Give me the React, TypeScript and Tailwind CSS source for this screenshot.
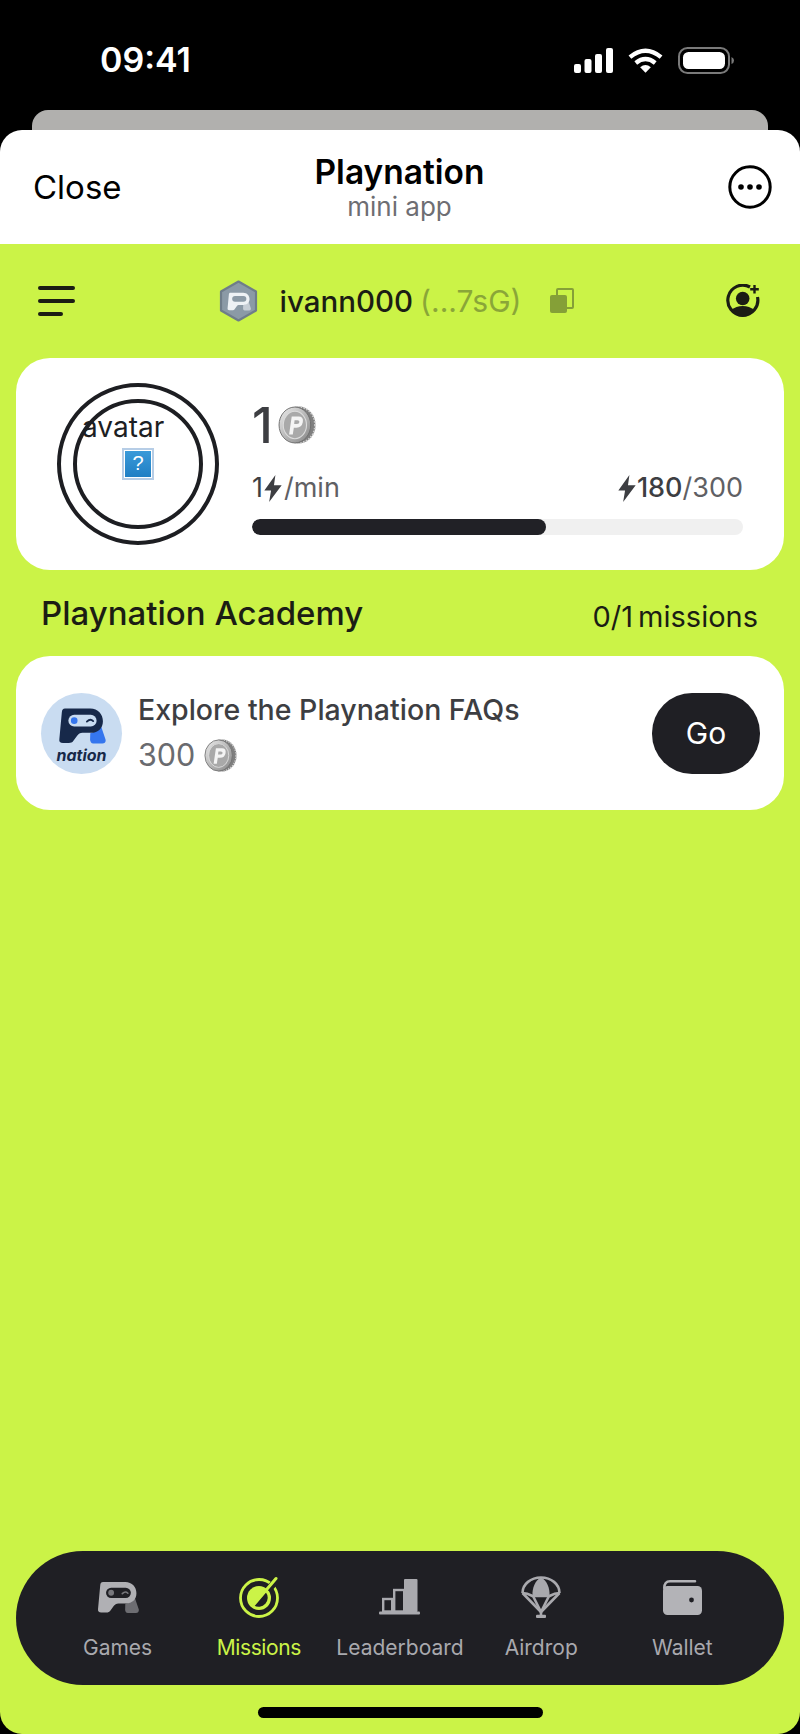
import React from "react";

const sans = { fontFamily: "Inter, 'Liberation Sans', sans-serif" };

function Coin({ size }: { size: number }) {
  return (
    <svg width={size} height={size} viewBox="0 0 36 36" className="shrink-0">
      <defs>
        <linearGradient id={`c${size}`} x1="0" y1="0" x2="1" y2="1">
          <stop offset="0" stopColor="#ececec" />
          <stop offset="1" stopColor="#858585" />
        </linearGradient>
      </defs>
      <ellipse cx="19.5" cy="18" rx="16" ry="17.5" fill="#7f7f7f" />
      <ellipse cx="19.5" cy="18" rx="15.6" ry="17" fill="none" stroke="#d0d0d0" strokeWidth="1.8" strokeDasharray="1.4 1.4" />
      <ellipse cx="16" cy="18" rx="15" ry="17" fill={`url(#c${size})`} stroke="#6f6f6f" strokeWidth="0.9" />
      <ellipse cx="16" cy="18" rx="11" ry="13" fill="#a9a9a9" stroke="#dcdcdc" strokeWidth="1" />
      <path d="M10.5 27 L13 10 H19.5 Q24.5 10 23.5 15.5 Q22.5 20.5 17.5 20.5 H15 L14 27 Z M15.7 13.5 L15.3 17 H18 Q20.1 17 20.3 15.2 Q20.4 13.5 18.5 13.5 Z" fill="#f4f4f4" fillRule="evenodd" />
    </svg>
  );
}

function Bolt({ w, h, color = "#3d3e42" }: { w: number; h: number; color?: string }) {
  return (
    <svg width={w} height={h} viewBox="0 0 20 28" className="shrink-0">
      <path d="M12.5 0 L1 16 H8 L6 28 L19 10.5 H11 Z" fill={color} />
    </svg>
  );
}

const P_BODY = "M7 0.5 H33 C41 0.5 46 6.5 46 13.5 C46 20.5 41 25.5 34 25.5 H25 C22.5 25.5 21 26.5 19.5 28.5 L15.5 34 C14.5 35.5 13 36 11 36 H5 C2 36 0.8 34.5 1.2 32 L3.8 4 C4 1.8 5 0.5 7 0.5 Z";
const P_LEG = "M33 26 C38 25 42 22 43.5 17 L48.6 32 C49.4 34.5 48 36.5 45.5 36.5 H36 C34 36.5 33.2 35 32.8 33 Z";

function PMark({ w, h, main, accent, slot, dot, wink }: { w: number; h: number; main: string; accent: string; slot: string; dot: string; wink: string }) {
  return (
    <svg width={w} height={h} viewBox="0 0 49 37">
      <path d={P_LEG} fill={accent} />
      <path d={P_BODY} fill={main} />
      <rect x="10.5" y="7" width="29" height="12" rx="6" fill={slot} />
      <circle cx="16.5" cy="13" r="3.4" fill={dot} />
      <path d="M29.5 14 Q33 10.5 36 13.5" fill="none" stroke={wink} strokeWidth="1.9" strokeLinecap="round" />
    </svg>
  );
}

function NavItem({ label, active, icon, extra }: { label: string; active?: boolean; icon: React.ReactNode; extra?: string }) {
  return (
    <div className="flex flex-col items-center">
      <div className="h-[44px] flex items-center justify-center">{icon}</div>
      <div className={`mt-[16px] text-[21px] leading-[26px] whitespace-nowrap ${active ? "text-[#cbf347]" : "text-[#a9a9ae]"} ${extra ?? ""}`}>{label}</div>
    </div>
  );
}

export default function App() {
  return (
    <div className="w-[800px] h-[1734px] bg-black flex flex-col overflow-hidden" style={sans}>
      {/* status bar */}
      <div className="h-[110px] flex items-start justify-between pl-[100px] pr-[65px] pt-[39px] text-white">
        <div className="text-[34px] leading-[42px] font-semibold">09:41</div>
        <div className="flex items-center gap-[15px] pt-[8px]">
          <svg width="39" height="25" viewBox="0 0 39 25" fill="white">
            <rect x="0" y="16" width="7" height="9" rx="2" />
            <rect x="10.5" y="11" width="7" height="14" rx="2" />
            <rect x="21" y="6" width="7" height="19" rx="2" />
            <rect x="32" y="0" width="7" height="25" rx="2" />
          </svg>
          <svg width="35" height="25" viewBox="0 0 36 25" fill="none" stroke="white" strokeWidth="4.5">
            <path d="M2 9 Q18 -4 34 9" />
            <path d="M8 15 Q18 7 28 15" />
            <path d="M18 25 L12.5 19.5 Q18 15 23.5 19.5 Z" fill="white" stroke="none" />
          </svg>
          <svg width="57" height="27" viewBox="0 0 57 27">
            <rect x="1" y="1" width="50" height="25" rx="8.5" fill="none" stroke="#7a7a7a" strokeWidth="2" />
            <rect x="5" y="5" width="42" height="17" rx="5.5" fill="white" />
            <path d="M53.5 10 Q56 11 56 13.5 Q56 16 53.5 17 Z" fill="#7a7a7a" />
          </svg>
        </div>
      </div>

      {/* card behind */}
      <div className="h-[20px] mx-[32px] bg-[#b1b0ae] rounded-t-[16px]" />

      {/* title sheet */}
      <div className="h-[114px] bg-white rounded-t-[22px] flex items-center justify-between pl-[33px] pr-[28px] shrink-0">
        <div className="text-[33px] leading-[40px] text-black w-[117px]">Close</div>
        <div className="flex flex-col items-center">
          <div className="text-[33.5px] leading-[39px] font-semibold text-black">Playnation</div>
          <div className="text-[26px] leading-[30px] text-[#6e6e73]">mini app</div>
        </div>
        <div className="w-[123px] flex justify-end">
          <svg width="44" height="44" viewBox="0 0 44 44">
            <circle cx="22" cy="22" r="20.2" fill="none" stroke="black" strokeWidth="3" />
            <circle cx="13" cy="22" r="2.8" fill="black" />
            <circle cx="22" cy="22" r="2.8" fill="black" />
            <circle cx="31" cy="22" r="2.8" fill="black" />
          </svg>
        </div>
      </div>

      {/* lime page */}
      <div className="flex-1 bg-[#cbf347] rounded-b-[22px] flex flex-col px-[16px]">
        {/* top row */}
        <div className="h-[114px] flex items-center justify-between pl-[22px] pr-[24px] shrink-0">
          <svg width="38" height="30" viewBox="0 0 38 30" fill="#1b1d14">
            <rect x="0" y="0" width="37" height="4" rx="2" />
            <rect x="0" y="13" width="37" height="4" rx="2" />
            <rect x="0" y="26" width="25" height="4" rx="2" />
          </svg>
          <div className="flex items-center mr-[8px]">
            <svg width="39" height="42" viewBox="0 0 39 42" className="mr-[22px]">
              <path d="M19.5 1.5 L37 11.5 V30.5 L19.5 40.5 L2 30.5 V11.5 Z" fill="#8b9aa6" stroke="#6f7d89" strokeWidth="2.2" strokeLinejoin="round" />
              <g transform="translate(8 12.5) scale(0.49)">
                <path d={P_LEG} fill="#c6ced5" />
                <path d={P_BODY} fill="#eef2f5" />
                <rect x="10.5" y="7" width="29" height="12" rx="6" fill="#8b9aa6" />
              </g>
            </svg>
            <span className="text-[29.5px] leading-[36px] font-medium text-[#1b1d14]">ivann000</span>
            <span className="text-[30px] leading-[36px] text-[#8aa638] ml-[7px]">(...7sG)</span>
            <svg width="26" height="26" viewBox="0 0 26 26" className="ml-[28px]">
              <rect x="8" y="1" width="16" height="19" rx="1" fill="none" stroke="#85a037" strokeWidth="2" />
              <rect x="1" y="7" width="17" height="18" rx="2" fill="#85a037" />
            </svg>
          </div>
          <svg width="34" height="34" viewBox="0 0 34 34">
            <path d="M24 3 A15 15 0 1 0 31.5 13" fill="none" stroke="#1b1d14" strokeWidth="3.2" />
            <circle cx="16.7" cy="14.5" r="6.8" fill="#1b1d14" />
            <path d="M5.5 26 Q10 22 16.7 22 Q23.5 22 28 26 Q23 33 16.7 33 Q10 33 5.5 26 Z" fill="#1b1d14" />
            <path d="M28.5 1 V9.5 M24.2 5.2 H32.8" stroke="#1b1d14" strokeWidth="2.4" />
          </svg>
        </div>

        {/* balance card */}
        <div className="h-[212px] bg-white rounded-[34px] flex items-start shrink-0 pl-[41px] pr-[41px]">
          <div className="relative w-[162px] h-[162px] mt-[25px] shrink-0 rounded-full border-[4px] border-[#1d1e22] flex items-center justify-center">
            <div className="w-[130px] h-[130px] rounded-full border-[4px] border-[#1d1e22]" />
            <div className="absolute left-[21px] top-[24px] flex flex-col items-start">
              <div className="text-[28px] leading-[32px] text-[#1d1e22]">avatar</div>
              <div className="mt-[5px] ml-[40px] w-[32px] h-[32px] border-[2px] border-[#b6cde6] p-[1px] bg-white">
                <div className="w-full h-full bg-gradient-to-b from-[#3a9ad9] to-[#1f7fc4] text-white text-[20px] leading-[24px] text-center font-medium" style={{ fontFamily: "'Liberation Sans', sans-serif" }}>?</div>
              </div>
            </div>
          </div>
          <div className="flex-1 ml-[33px] pt-[39px] flex flex-col">
            <div className="flex items-center h-[56px]">
              <span className="text-[50px] leading-[56px] font-medium text-[#3d3e42]">1</span>
              <span className="ml-[5px]"><Coin size={38} /></span>
            </div>
            <div className="flex items-center justify-between mt-[20px] h-[30px] text-[27px] leading-[30px] text-[#5f6064]">
              <div className="flex items-center">
                <span className="text-[#3d3e42]">1</span>
                <Bolt w={20} h={27} />
                <span className="ml-[1px]">/min</span>
              </div>
              <div className="flex items-center">
                <Bolt w={20} h={27} />
                <span className="font-medium text-[#3d3e42]">180</span>
                <span>/300</span>
              </div>
            </div>
            <div className="mt-[16px] h-[16px] rounded-full bg-[#f0f0f0] overflow-hidden">
              <div className="h-full w-[294px] rounded-full bg-[#212126]" />
            </div>
          </div>
        </div>

        {/* section head */}
        <div className="h-[86px] flex items-center justify-between pl-[25px] pr-[26px] shrink-0 text-[#1b1d14]">
          <div className="text-[33px] leading-[40px] font-medium">Playnation Academy</div>
          <div className="text-[29px] leading-[34px] [word-spacing:-3px] pt-[8px]">0/1 missions</div>
        </div>

        {/* mission card */}
        <div className="h-[154px] bg-white rounded-[34px] flex items-center pl-[25px] pr-[24px] shrink-0">
          <div className="w-[81px] h-[81px] rounded-full bg-[#c9dcf1] flex flex-col items-center pt-[15px] shrink-0">
            <PMark w={48} h={36} main="#17294a" accent="#3576ee" slot="#c9dcf1" dot="#3576ee" wink="#17294a" />
            <div className="text-[16px] leading-[20px] font-bold italic text-[#17294a] mt-[1px]">nation</div>
          </div>
          <div className="flex-1 ml-[16px]">
            <div className="text-[28.5px] leading-[34px] font-medium text-[#3d3e42]">Explore the Playnation FAQs</div>
            <div className="flex items-center mt-[10px]">
              <span className="text-[30.5px] leading-[36px] text-[#6a6b6f]">300</span>
              <span className="ml-[9px]"><Coin size={33} /></span>
            </div>
          </div>
          <div className="w-[108px] h-[81px] rounded-[40px] bg-[#1f1f24] text-white text-[30px] flex items-center justify-center shrink-0">Go</div>
        </div>

        <div className="flex-1" />

        {/* bottom nav */}
        <div className="h-[134px] rounded-[67px] bg-[#1f1f24] grid grid-cols-5 px-[31px] pt-[24px] shrink-0">
          <NavItem label="Games" icon={
            <PMark w={42} h={33} main="#b0b0b4" accent="#6d6d72" slot="#1f1f24" dot="#77777c" wink="#77777c" />
          } />
          <NavItem label="Missions" active extra="[letter-spacing:-0.4px]" icon={
            <svg width="42" height="42" viewBox="0 0 42 42" fill="none">
              <circle cx="21" cy="22" r="18.5" stroke="#cbf347" strokeWidth="2.8" />
              <circle cx="21" cy="22" r="12" fill="#cbf347" />
              <path d="M27.77 16.14 A9 9 0 0 1 15.7 29.2 Z" fill="#1f1f24" />
              <path d="M38 5 L30 14" stroke="#1f1f24" strokeWidth="7" />
              <path d="M38 2.5 L15.5 29" stroke="#cbf347" strokeWidth="3" strokeLinecap="round" />
            </svg>
          } />
          <NavItem label="Leaderboard" icon={
            <svg width="41" height="36" viewBox="0 0 41 36" fill="none" stroke="#a9a9ae">
              <rect x="0" y="32.5" width="41" height="3" rx="1" fill="#a9a9ae" stroke="none" />
              <rect x="4.2" y="20" width="9" height="12.5" strokeWidth="2.4" />
              <rect x="15.2" y="11" width="10" height="21.5" strokeWidth="2.4" />
              <rect x="25" y="0" width="13.5" height="33" rx="1" fill="#a9a9ae" stroke="none" />
            </svg>
          } />
          <NavItem label="Airdrop" icon={
            <svg width="40" height="42" viewBox="0 0 40 42">
              <path d="M20 1.5 C14 4.5 11 12 11.5 20 H28.5 C29 12 26 4.5 20 1.5 Z" fill="#a9a9ae" />
              <g fill="none" stroke="#a9a9ae" strokeWidth="2.6" strokeLinejoin="round">
                <path d="M1.5 17 C1.5 8 10 1.5 20 1.5 C30 1.5 38.5 8 38.5 17" />
                <path d="M1.5 17 Q6 17 11.5 20 H28.5 Q34 17 38.5 17" />
                <path d="M1.5 17 L20 36 L38.5 17" />
                <path d="M12 20 L20 36 L28 20" />
                <path d="M20 36 V40" />
              </g>
              <rect x="15" y="38.8" width="10" height="3.2" rx="1" fill="#a9a9ae" />
            </svg>
          } />
          <NavItem label="Wallet" icon={
            <svg width="39" height="35" viewBox="0 0 39 35" fill="#b3b3b7">
              <path d="M1.3 8 Q1.3 1.3 7 1.3 H32" fill="none" stroke="#b3b3b7" strokeWidth="2.6" strokeLinecap="round" />
              <rect x="0" y="6" width="39" height="29" rx="4.5" />
              <circle cx="28.5" cy="20" r="2.4" fill="#1f1f24" />
            </svg>
          } />
        </div>

        {/* home indicator */}
        <div className="h-[49px] flex items-start justify-center pt-[22px] shrink-0">
          <div className="w-[285px] h-[11px] rounded-full bg-black" />
        </div>
      </div>
    </div>
  );
}
